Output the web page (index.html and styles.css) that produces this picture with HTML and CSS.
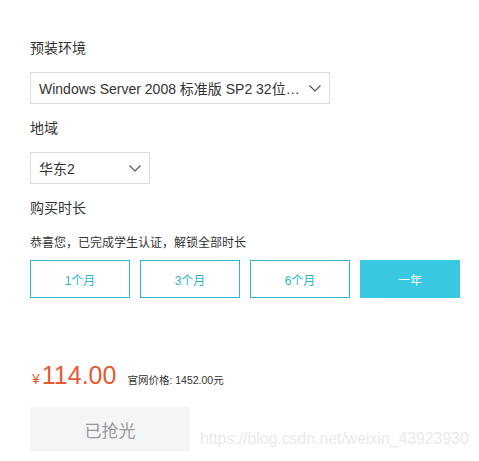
FILE: index.html
```html
<!DOCTYPE html>
<html lang="zh-CN">
<head>
<meta charset="utf-8">
<title>购买</title>
<link rel="stylesheet" href="styles.css">
</head>
<body>
<div class="page">
  <div class="label">预装环境</div>
  <div class="select select-wide">
    <span class="select-text">Windows Server 2008 标准版 SP2 32位…</span>
    <svg class="chev" width="12" height="7" viewBox="0 0 12 7"><path d="M0.5 0.5 L6 6 L11.5 0.5" fill="none" stroke="#555" stroke-width="1.2"/></svg>
  </div>
  <div class="label">地域</div>
  <div class="select select-small">
    <span class="select-text">华东2</span>
    <svg class="chev" width="12" height="7" viewBox="0 0 12 7"><path d="M0.5 0.5 L6 6 L11.5 0.5" fill="none" stroke="#555" stroke-width="1.2"/></svg>
  </div>
  <div class="label">购买时长</div>
  <div class="notice">恭喜您，已完成学生认证，解锁全部时长</div>
  <div class="durations">
    <div class="dur">1个月</div>
    <div class="dur">3个月</div>
    <div class="dur">6个月</div>
    <div class="dur dur-active">一年</div>
  </div>
  <div class="price-row">
    <span class="yen">¥</span>
    <span class="price">114.00</span>
    <span class="orig">官网价格: 1452.00元</span>
  </div>
  <div class="buy">已抢光</div>
</div>
<div class="watermark">https://blog.csdn.net/weixin_43923930</div>
</body>
</html>
```

FILE: styles.css
```css
html, body {
  margin: 0;
  padding: 0;
  background: #fff;
}
body {
  font-family: "Liberation Sans", "Noto Sans CJK SC", sans-serif;
  color: #333;
  position: relative;
  width: 479px;
  height: 461px;
  overflow: hidden;
}
.page {
  display: flex;
  flex-direction: column;
  align-items: flex-start;
  padding: 38px 0 0 30px;
}
.label {
  font-size: 14px;
  line-height: 20px;
  color: #333;
}
.select {
  box-sizing: border-box;
  height: 32px;
  border: 1px solid #dcdcdc;
  display: flex;
  align-items: center;
  justify-content: space-between;
  padding: 0 8px 0 8px;
  margin: 14px 0 14px 0;
}
.select-wide {
  width: 300px;
}
.select-small {
  width: 120px;
}
.select-text {
  font-size: 14px;
  color: #333;
  white-space: nowrap;
}
.chev {
  display: block;
  margin-right: 0;
}
.notice {
  font-size: 12px;
  line-height: 18px;
  margin-top: 16px;
  color: #333;
}
.durations {
  display: flex;
  gap: 10px;
  margin-top: 8px;
}
.dur {
  box-sizing: border-box;
  width: 100px;
  height: 38px;
  border: 1px solid #2fb5c9;
  color: #2fb5c9;
  font-size: 12px;
  display: flex;
  align-items: center;
  justify-content: center;
}
.dur-active {
  background: #38c8e1;
  border-color: #38c8e1;
  color: #fff;
}
.price-row {
  display: flex;
  align-items: baseline;
  margin-top: 62px;
  line-height: 30px;
}
.yen {
  font-size: 14px;
  color: #e35a33;
  margin-left: 2px;
  margin-right: 2px;
}
.price {
  font-size: 25px;
  color: #e35a33;
}
.orig {
  font-size: 10.5px;
  color: #333;
  margin-left: 11px;
}
.buy {
  box-sizing: border-box;
  width: 160px;
  height: 44px;
  margin-top: 12px;
  background: #f4f5f7;
  color: #999;
  font-size: 17px;
  display: flex;
  align-items: center;
  justify-content: center;
}
.watermark {
  position: absolute;
  left: 200px;
  top: 430px;
  font-size: 15.8px;
  color: #e9e9e9;
  text-shadow: 0 0 1px #fff, 0 0 1px #fff;
  white-space: nowrap;
}
```
